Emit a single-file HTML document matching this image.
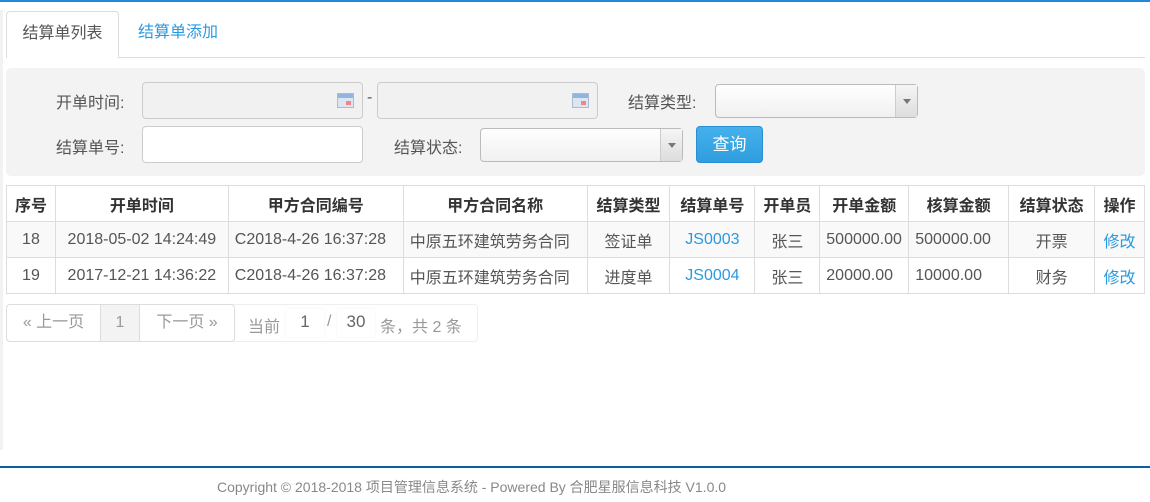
<!DOCTYPE html>
<html><head><meta charset="utf-8"><style>
*{margin:0;padding:0;box-sizing:border-box}
body{width:1150px;height:502px;background:#fff;font-family:"Liberation Sans","Noto Sans CJK SC",sans-serif;font-size:16px;color:#555;position:relative;overflow:hidden}
.a{position:absolute}
.inp{position:absolute;border:1px solid #ccc;border-radius:4px;background:#fff}
.dis{background:#f1f1f1}
.sel{position:absolute;border:1px solid #bbb;border-radius:4px;background:linear-gradient(#fff,#f0f0f0)}
.sel i{position:absolute;right:0;top:0;bottom:0;width:22px;border-left:1px solid #ccc;background:linear-gradient(#f5f5f5,#ddd)}
.sel i:after{content:"";position:absolute;left:7px;top:14px;border:4px solid transparent;border-top:5px solid #777}
.cal{position:absolute;right:8px;top:10px;width:17px;height:15px;background:linear-gradient(#8fb5e0 0 4px,#dde6f0 4px);border:1px solid #a9bcd3}
.cal:after{content:"";position:absolute;right:2px;bottom:2px;width:5px;height:4px;background:#e88}
table{position:absolute;left:6px;top:185px;width:1139px;border-collapse:collapse;font-size:16px}
td,th{border:1px solid #ddd;height:36px;text-align:center;white-space:nowrap;padding:0}
th{color:#333;font-weight:bold;background:#fff}
tbody tr{background:#f9f9f9}
.l{text-align:left;padding-left:6px}
.b{color:#2a9ae0}
</style></head><body>
<div class="a" style="left:0;top:0;width:1150px;height:2px;background:#1f8ad6"></div>
<div class="a" style="left:0;top:10px;width:3px;height:440px;background:#f2f2f2"></div>
<div class="a" style="left:6px;top:57px;width:1139px;height:1px;background:#ddd"></div>
<div class="a" style="left:6px;top:11px;width:113px;height:47px;border:1px solid #ddd;border-bottom:none;border-radius:4px 4px 0 0;background:#fff;text-align:center;line-height:44px;color:#555">结算单列表</div>
<div class="a" style="left:138px;top:11px;line-height:44px;color:#2a9ae0">结算单添加</div>
<div class="a" style="left:6px;top:68px;width:1139px;height:108px;background:#f3f3f3;border-radius:5px"></div>
<div class="a" style="left:56px;top:89px">开单时间:</div>
<div class="inp dis" style="left:142px;top:82px;width:221px;height:37px"><div class="cal"></div></div>
<div class="a" style="left:367px;top:89px">-</div>
<div class="inp dis" style="left:377px;top:82px;width:221px;height:37px"><div class="cal"></div></div>
<div class="a" style="left:628px;top:89px">结算类型:</div>
<div class="sel" style="left:715px;top:84px;width:203px;height:34px"><i></i></div>
<div class="a" style="left:56px;top:134px">结算单号:</div>
<div class="inp" style="left:142px;top:126px;width:221px;height:37px"></div>
<div class="a" style="left:394px;top:134px">结算状态:</div>
<div class="sel" style="left:480px;top:128px;width:203px;height:34px"><i></i></div>
<div class="a" style="left:696px;top:126px;width:67px;height:37px;background:linear-gradient(#45b0ec,#2f9ddf);border:1px solid #2a8fcf;border-radius:4px;color:#fff;text-align:center;line-height:35px;font-size:17px">查询</div>
<table>
<colgroup><col style="width:49px"><col style="width:173px"><col style="width:175px"><col style="width:184px"><col style="width:83px"><col style="width:85px"><col style="width:65px"><col style="width:89px"><col style="width:100px"><col style="width:86px"><col style="width:50px"></colgroup>
<thead><tr><th>序号</th><th>开单时间</th><th>甲方合同编号</th><th>甲方合同名称</th><th>结算类型</th><th>结算单号</th><th>开单员</th><th>开单金额</th><th>核算金额</th><th>结算状态</th><th>操作</th></tr></thead>
<tbody>
<tr><td>18</td><td>2018-05-02 14:24:49</td><td class="l">C2018-4-26 16:37:28</td><td class="l">中原五环建筑劳务合同</td><td>签证单</td><td class="b">JS0003</td><td>张三</td><td class="l">500000.00</td><td class="l">500000.00</td><td>开票</td><td class="b">修改</td></tr>
<tr style="background:#fff"><td>19</td><td>2017-12-21 14:36:22</td><td class="l">C2018-4-26 16:37:28</td><td class="l">中原五环建筑劳务合同</td><td>进度单</td><td class="b">JS0004</td><td>张三</td><td class="l">20000.00</td><td class="l">10000.00</td><td>财务</td><td class="b">修改</td></tr>
</tbody></table>
<div class="a" style="left:6px;top:304px;width:472px;height:38px;border:1px solid #eee;border-radius:4px"></div>
<div class="a" style="left:6px;top:304px;width:229px;height:38px;border:1px solid #ddd;border-radius:4px;overflow:hidden;font-size:16px;color:#999;line-height:36px">
<span class="a" style="left:0;width:93px;text-align:center">« 上一页</span>
<span class="a" style="left:93px;width:40px;height:36px;text-align:center;background:#f3f3f3;border-left:1px solid #ddd;border-right:1px solid #ddd">1</span>
<span class="a" style="left:133px;width:94px;text-align:center">下一页 »</span></div>
<div class="a" style="left:248px;top:313px;color:#999">当前</div>
<div class="a" style="left:286px;top:309px;width:38px;height:28px;background:#fff;text-align:center;line-height:26px;color:#666;font-size:17px;box-shadow:0 0 2px #eee">1</div>
<div class="a" style="left:327px;top:313px;color:#999">/</div>
<div class="a" style="left:337px;top:309px;width:38px;height:28px;text-align:center;line-height:26px;color:#666;font-size:17px;box-shadow:0 0 2px #eee">30</div>
<div class="a" style="left:380px;top:313px;color:#999">条，共 2 条</div>
<div class="a" style="left:0;top:466px;width:1150px;height:2px;background:#0b5fa0"></div>
<div class="a" style="left:217px;top:477px;font-size:14px;color:#888">Copyright © 2018-2018 项目管理信息系统 - Powered By 合肥星服信息科技 V1.0.0</div>
</body></html>
